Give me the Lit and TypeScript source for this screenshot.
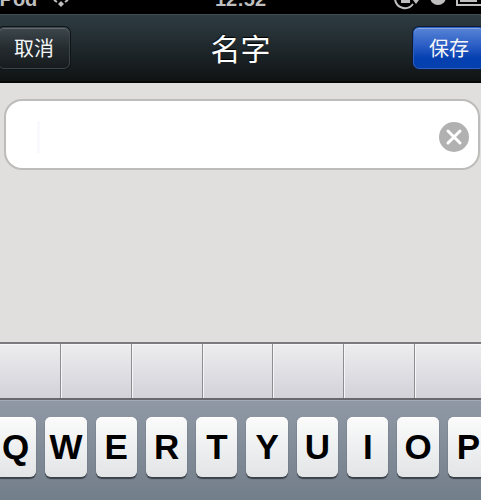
import { LitElement, html, css } from "lit";
import { customElement, state } from "lit/decorators.js";

@customElement("app-root")
export class AppRoot extends LitElement {
  static styles = css`
    :host {
      display: flex;
      flex-direction: column;
      min-height: 100vh;
      overflow: hidden;
      background: #e0dfdd;
      font-family: "Liberation Sans", "Noto Sans CJK SC", sans-serif;
    }
    * { box-sizing: border-box; }
    button { font: inherit; margin: 0; padding: 0; cursor: pointer; }

    .status {
      display: grid;
      grid-template-columns: 1fr auto 1fr;
      align-items: end;
      align-content: end;
      height: 14px;
      overflow: hidden;
      background: #000;
      color: #bfbfbf;
      font-size: 20px;
      line-height: 30px;
      font-weight: bold;
    }
    .carrier, .indicators { display: flex; align-items: end; }
    .carrier { gap: 12px; margin-left: -6px; }
    .indicators { justify-content: end; }
    .status svg { display: block; flex: none; }

    .nav {
      display: grid;
      grid-template-columns: 1fr auto 1fr;
      align-items: center;
      height: 69px;
      padding-bottom: 1px;
      border-bottom: 2px solid #060808;
      border-top: 1px solid #3d4a50;
      background: linear-gradient(#2e3c42, #1f282c 50%, #101314);
    }
    .title {
      margin: 0;
      color: #fff;
      font-size: 30px;
      line-height: 40px;
      padding-bottom: 2px;
      font-weight: 400;
      font-family: "Noto Sans CJK SC", sans-serif;
      text-shadow: 0 -1px 1px #000;
    }
    .action {
      height: 42px;
      width: 72px;
      color: #f4f6f8;
      font-size: 20px;
      line-height: 40px;
      font-weight: 400;
      font-family: "Noto Sans CJK SC", sans-serif;
      border-radius: 6px;
    }
    .cancel {
      margin-left: -2px;
      border: 1px solid #3b4448;
      background: linear-gradient(#3d474c, #252c30 50%, #171b1d);
      box-shadow: 0 0 0 1px #0f1416, inset 0 1px 0 #606a6f;
    }
    .save {
      justify-self: end;
      margin-right: -4px;
      border: 1px solid #2c5fc4;
      background: linear-gradient(#5684d6, #2a5cc4 45%, #0440b0 75%, #0540ae);
      box-shadow: 0 0 0 1px #101a30, inset 0 1px 0 #86a7e2;
    }

    .content { flex: 1; padding: 16px 1px 0 4px; }
    .field {
      display: flex;
      align-items: center;
      height: 71px;
      padding: 4px 9px 0 31px;
      border: 2px solid #bdbcbb;
      border-radius: 18px;
      background: #fff;
    }
    .input {
      flex: 1;
      min-width: 0;
      height: 32px;
      padding: 0;
      border: 0;
      outline: 0;
      background: linear-gradient(#f9f9fe, #f9f9fe) left / 3px 100% no-repeat;
      font: inherit;
      font-size: 28px;
      caret-color: #f7f7fc;
    }
    .clear { display: block; border: 0; background: none; width: 30px; height: 30px; }
    .clear svg { display: block; }

    .candidates {
      display: grid;
      grid-template-columns: repeat(7, 1fr);
      height: 58px;
      margin: 0 -5px 0 -10px;
      border-top: 2px solid #7b7b7f;
      border-bottom: 2px solid #66686e;
    }
    .candidate {
      border: 0;
      border-right: 1px solid #8d8d91;
      background: linear-gradient(#ededef, #d3d2d9);
      box-shadow: inset 1px 1px 0 #f6f6f8;
    }
    .keyboard {
      height: 100px;
      padding-top: 16px;
      border-top: 1px solid #a3abb7;
      background: linear-gradient(#9098a5, #737e8b);
    }
    .row {
      display: grid;
      grid-template-columns: repeat(10, 1fr);
      gap: 9px;
      margin: 0 -8px 0 -5px;
    }
    .key {
      height: 60px;
      border: 0;
      border-radius: 6px;
      background: linear-gradient(#fbfbfb, #e2e4e6);
      box-shadow: 0 2px 1px #3a4048, inset 0 1px 0 #fff;
      color: #000;
      font-size: 35px;
      line-height: 60px;
      font-weight: bold;
      text-align: center;
    }
  `;

  @state() private name = "";

  private onInput(e: Event) {
    this.name = (e.target as HTMLInputElement).value;
  }

  render() {
    return html`
      <div class="status">
        <div class="carrier">
          <span>iPod</span>
          <svg width="24" height="14" viewBox="0 0 24 14" fill="none" stroke="#bfbfbf">
            <path d="M5 0L8 2M19 0L16 2" stroke-width="2" />
            <path d="M12 1L15 4L12 7L9 4Z" fill="#bfbfbf" stroke="none" />
          </svg>
        </div>
        <span>12:52</span>
        <div class="indicators">
          <svg width="88" height="14" viewBox="393 0 88 14" fill="none" stroke="#bfbfbf">
            <path d="M395 -1A10 10 0 0 0 413 4" stroke-width="2" />
            <path d="M413 0h6l-3 4z" fill="#bfbfbf" stroke="none" />
            <path d="M401 0h9v3h-9z" fill="#bfbfbf" stroke="none" />
            <circle cx="438" cy="-3" r="8" fill="#bfbfbf" stroke="none" />
            <path d="M457 -4V5H490" stroke-width="2" />
            <path d="M460 -4h17v6h-17z" fill="#bfbfbf" stroke="none" />
          </svg>
        </div>
      </div>
      <header class="nav">
        <button class="action cancel">取消</button>
        <h1 class="title">名字</h1>
        <button class="action save">保存</button>
      </header>
      <main class="content">
        <div class="field">
          <input class="input" aria-label="名字" .value=${this.name} @input=${this.onInput} />
          <button class="clear" aria-label="清除" @click=${() => (this.name = "")}>
            <svg width="30" height="30" viewBox="0 0 30 30">
              <circle cx="15" cy="15" r="15" fill="#b1b1b1" />
              <path d="M9 9L21 21M21 9L9 21" stroke="#fff" stroke-width="3" stroke-linecap="round" />
            </svg>
          </button>
        </div>
      </main>
      <div class="candidates">
        ${Array.from({ length: 7 }, (_, i) => html`<button class="candidate" aria-label="候选 ${i + 1}"></button>`)}
      </div>
      <div class="keyboard">
        <div class="row">
          ${[..."QWERTYUIOP"].map((k) => html`<button class="key">${k}</button>`)}
        </div>
      </div>
    `;
  }
}
